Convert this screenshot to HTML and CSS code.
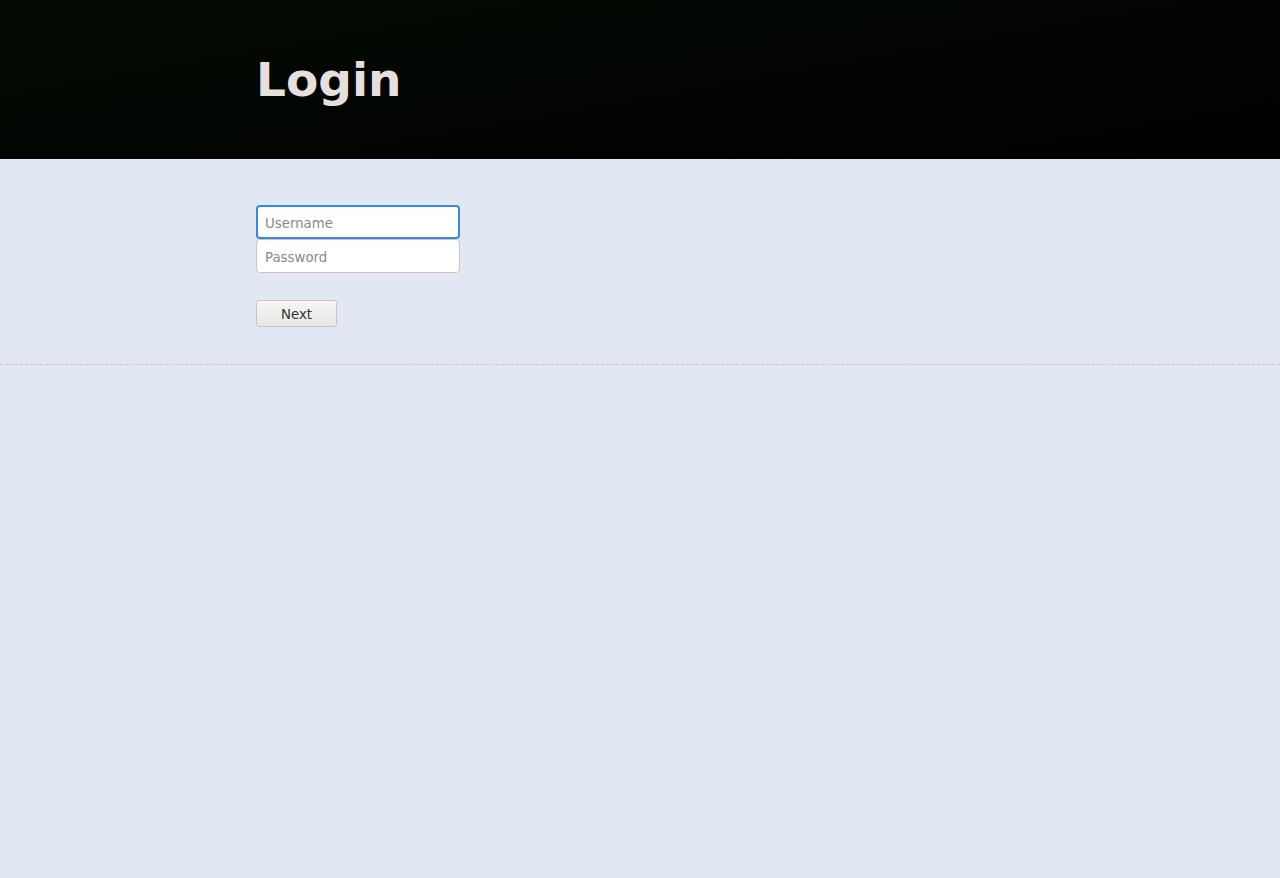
FILE: index.html
```html
<!DOCTYPE html>
<html lang="en">
<head>
<meta charset="utf-8">
<title>Login</title>
<link rel="stylesheet" href="styles.css">
</head>
<body>
<header class="masthead">
  <div class="wrap">
    <h1 class="title">Login</h1>
  </div>
</header>
<main class="content">
  <form class="wrap login-form">
    <div class="fields">
      <input class="field field-focus" type="text" placeholder="Username" autofocus>
      <input class="field" type="password" placeholder="Password">
    </div>
    <button class="btn" type="button">Next</button>
  </form>
</main>
<div class="divider"></div>
</body>
</html>
```
FILE: styles.css
```css
html, body {
  margin: 0;
  padding: 0;
}
body {
  background: #e1e8f4;
  font-family: "DejaVu Sans", sans-serif;
  min-height: 878px;
}
.wrap {
  margin-left: 256px;
}
.masthead {
  height: 159px;
  background: linear-gradient(170deg, #030a03 0%, #020602 40%, #000000 100%);
  display: flex;
  align-items: center;
}
.title {
  margin: 0;
  font-family: "DejaVu Sans", sans-serif;
  font-weight: bold;
  font-size: 47px;
  line-height: 1;
  color: #e6dfdf;
}
.content {
  padding-top: 46px;
  padding-bottom: 37px;
}
.login-form {
  display: flex;
  flex-direction: column;
  align-items: flex-start;
}
.fields {
  display: flex;
  flex-direction: column;
}
.field {
  box-sizing: border-box;
  width: 204px;
  height: 34px;
  margin: 0;
  padding: 2px 8px 0;
  border: 1px solid #c9c5bd;
  border-radius: 4px;
  background: #fff;
  font-family: "DejaVu Sans", sans-serif;
  font-size: 13.333px;
  color: #333;
  outline: none;
}
.field::placeholder {
  color: #8a8a8a;
}
.field-focus {
  border: 2px solid #3a87e3;
  padding-left: 7px;
}
.btn {
  margin-top: 27px;
  box-sizing: border-box;
  width: 81px;
  height: 27px;
  border: 1px solid #c9c5bd;
  border-radius: 3px;
  background: linear-gradient(#f8f7f6, #e9e7e3);
  font-family: "DejaVu Sans", sans-serif;
  font-size: 13.333px;
  color: #333;
  padding: 2px 0 0;
}
.divider {
  border-top: 1px dashed #c8c8c8;
}
```
